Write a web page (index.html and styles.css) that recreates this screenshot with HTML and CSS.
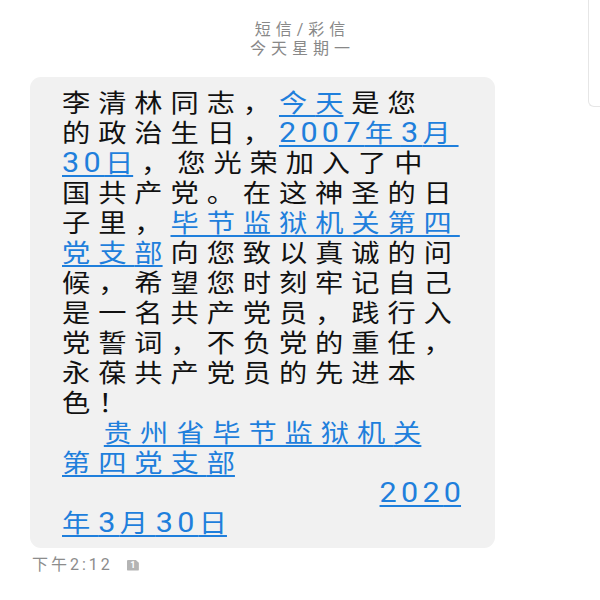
FILE: index.html
```html
<!DOCTYPE html>
<html lang="zh-CN">
<head>
<meta charset="utf-8">
<title>短信/彩信</title>
<link rel="stylesheet" href="styles.css">
</head>
<body>
<div class="side-panel"></div>
<header class="thread-head">
  <div class="head-title">短信/彩信</div>
  <div class="head-date">今天星期一</div>
</header>
<main class="thread">
  <div class="bubble">
    <div class="msg-body">
      <p class="msg">李清林同志，<a class="lnk">今<span class="last">天</span></a>是您<br>的政治生日，<a class="lnk"><span class="num">2007</span>年<span class="num">3</span>月<br><span class="num">30</span><span class="last">日</span></a>，您光荣加入了中<br>国共产党。在这神圣的日<br>子里，<a class="lnk">毕节监狱机关第四<br>党支<span class="last">部</span></a>向您致以真诚的问<br>候，希望您时刻牢记自己<br>是一名共产党员，践行入<br>党誓词，不负党的重任，<br>永葆共产党员的先进本<br>色！</p>
      <p class="msg sign"><a class="lnk">贵州省毕节监狱机<span class="last">关</span><br>第四党支<span class="last">部</span></a></p>
      <p class="msg date"><a class="lnk"><span class="num">202<span class="last">0</span></span><br>年<span class="num">3</span>月<span class="num">30</span><span class="last">日</span></a></p>
    </div>
  </div>
  <div class="meta">
    <span class="time">下午2:12</span>
    <span class="sim">1</span>
  </div>
</main>
</body>
</html>
```

FILE: styles.css
```css
html, body {
  margin: 0;
  padding: 0;
  background: #ffffff;
}

body {
  position: relative;
  width: 600px;
  height: 600px;
  overflow: hidden;
  font-family: Roboto, "Noto Sans CJK SC", sans-serif;
}

.side-panel {
  position: absolute;
  top: 0;
  right: 0;
  width: 11px;
  height: 106px;
  border-left: 1px solid #e6e6e6;
  border-bottom: 1px solid #e6e6e6;
  border-bottom-left-radius: 6px;
}

.thread-head {
  padding-top: 20px;
  display: flex;
  flex-direction: column;
  align-items: center;
  color: #888888;
  font-size: 16px;
  line-height: 19px;
  letter-spacing: 5px;
}

.head-title,
.head-date {
  padding-left: 5px;
}

.thread {
  padding: 19px 0 0 30px;
}

.bubble {
  box-sizing: border-box;
  width: 465px;
  background: #f1f1f1;
  border-radius: 11px;
  padding: 12px 10px 9px 32px;
}

.msg-body {
  transform: scaleX(1.13);
  transform-origin: left top;
}

.msg {
  margin: 0;
  white-space: nowrap;
  font-size: 25px;
  line-height: 30px;
  letter-spacing: 7px;
  color: #111111;
}

.sign {
  text-indent: 37px;
}

.date {
  text-indent: 281px;
}

.lnk {
  color: #1f7fdc;
  text-decoration: underline;
  text-decoration-thickness: 2px;
  text-underline-offset: 3px;
  margin-right: 7px;
}

.num {
  font-size: 27px;
  line-height: 1;
  letter-spacing: 3.8px;
}

.last {
  letter-spacing: 0;
}

.meta {
  display: flex;
  align-items: center;
  gap: 14px;
  margin-top: 7px;
  padding-left: 2px;
  height: 20px;
}

.time {
  font-size: 16px;
  line-height: 20px;
  letter-spacing: 3px;
  color: #8c8c8c;
}

.sim {
  width: 12px;
  height: 11px;
  background: #b4b4b4;
  color: #ffffff;
  font-size: 9px;
  line-height: 11px;
  font-weight: bold;
  text-align: center;
  border-radius: 1px;
  clip-path: polygon(0 0, 70% 0, 100% 30%, 100% 100%, 0 100%);
}
```
